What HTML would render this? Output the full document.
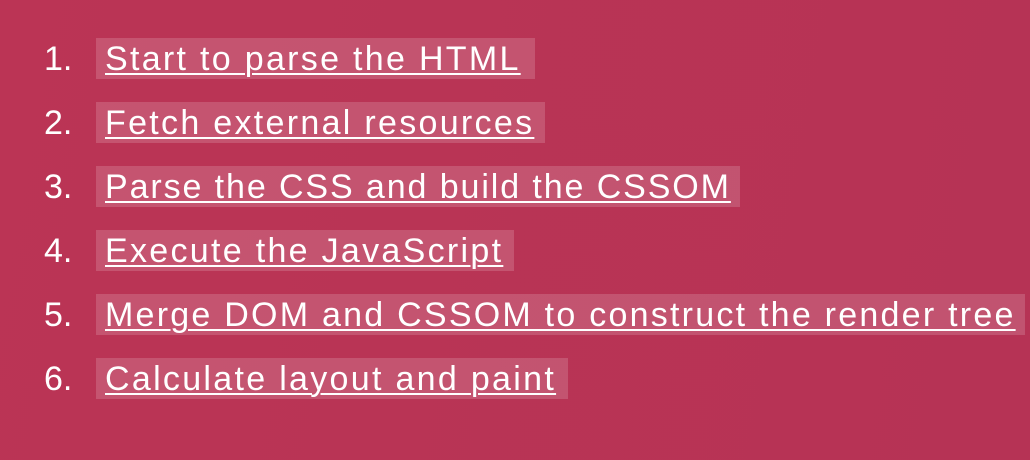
<!DOCTYPE html>
<html><head><meta charset="utf-8"><style>
html,body{margin:0;padding:0}
body{width:1030px;height:460px;overflow:hidden;background:linear-gradient(100deg,#bb3455,#b63355);font-family:"Liberation Sans",sans-serif;color:#fff;position:relative}
.n{position:absolute;left:44px;font-size:34px;line-height:41px;margin-top:1px}
.b{position:absolute;left:96px;height:41px;background:rgba(255,255,255,0.16);}
.t{position:absolute;left:9px;top:1px;font-size:34px;line-height:41px;letter-spacing:2.3px;white-space:nowrap;text-decoration:underline;text-decoration-thickness:2px;text-underline-offset:3px;transform-origin:0 50%}
</style></head><body>
<div class="n" style="top:38px">1.</div><div class="b" style="top:38px;width:439px"><span class="t">Start to parse the HTML</span></div>
<div class="n" style="top:102px">2.</div><div class="b" style="top:102px;width:449px"><span class="t">Fetch external resources</span></div>
<div class="n" style="top:166px">3.</div><div class="b" style="top:166px;width:644px"><span class="t" style="letter-spacing:1.9px">Parse the CSS and build the CSSOM</span></div>
<div class="n" style="top:230px">4.</div><div class="b" style="top:230px;width:418px"><span class="t">Execute the JavaScript</span></div>
<div class="n" style="top:294px">5.</div><div class="b" style="top:294px;width:929px"><span class="t" style="letter-spacing:2.24px">Merge DOM and CSSOM to construct the render tree</span></div>
<div class="n" style="top:358px">6.</div><div class="b" style="top:358px;width:472px"><span class="t">Calculate layout and paint</span></div>
</body></html>
